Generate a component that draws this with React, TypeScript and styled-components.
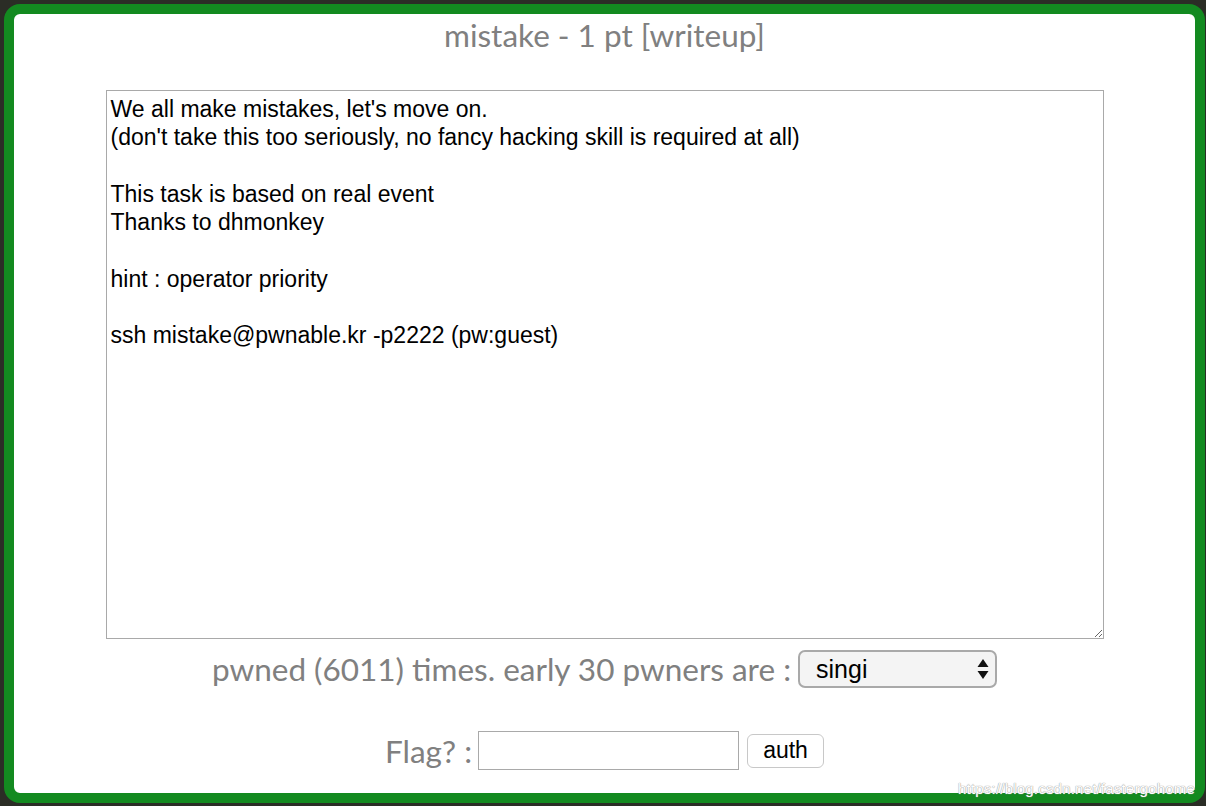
import React from "react";
import styled, { createGlobalStyle } from "styled-components";

const Global = createGlobalStyle`
  html, body { margin: 0; padding: 0; }
  body {
    width: 1206px;
    height: 806px;
    overflow: hidden;
    background: #2b2d26;
    font-family: "Liberation Sans", Arial, sans-serif;
  }
`;

const Page = styled.div`
  width: 1206px;
  height: 806px;
  padding: 4px 1px 3px 4px;
  box-sizing: border-box;
  position: relative;
`;

const Card = styled.div`
  box-sizing: border-box;
  height: 100%;
  background: #fff;
  border: 10px solid #138a20;
  border-radius: 16px;
  display: flex;
  flex-direction: column;
  align-items: center;
`;

const Title = styled.h1`
  margin: 2px 0 0;
  font-family: Lato, sans-serif;
  font-weight: 400;
  font-size: 31.5px;
  line-height: 38px;
  color: #808080;
`;

const Description = styled.textarea`
  box-sizing: border-box;
  margin-top: 36px;
  width: 998px;
  height: 549px;
  border: 1px solid #a9a9a9;
  padding: 4px 4px 2px;
  font-family: "Liberation Sans", Arial, sans-serif;
  font-size: 23px;
  line-height: 28.3px;
  color: #000;
  background: #fff;
  resize: both;
  outline: none;
`;

const Row = styled.div<{ $mt: number; $gap: number }>`
  display: flex;
  align-items: center;
  margin-top: ${(p) => p.$mt}px;
  gap: ${(p) => p.$gap}px;
`;

const Label = styled.span`
  font-family: Lato, sans-serif;
  font-size: 31.5px;
  line-height: 36px;
  color: #808080;
`;

const SelectBox = styled.div`
  box-sizing: border-box;
  width: 199px;
  height: 38px;
  border: 2px solid #a9a9a9;
  border-radius: 7px;
  background: #f4f4f4;
  display: flex;
  align-items: center;
  justify-content: space-between;
  padding: 0 6px 0 16px;
  font-family: "Liberation Sans", Arial, sans-serif;
  font-size: 25px;
  color: #000;
`;

const Arrows = styled.svg`
  width: 12px;
  height: 22px;
`;

const FlagInput = styled.input`
  box-sizing: border-box;
  width: 261px;
  height: 39px;
  border: 1px solid #a9a9a9;
  padding: 2px 6px;
  font-size: 22px;
  outline: none;
`;

const AuthButton = styled.button`
  box-sizing: border-box;
  width: 77px;
  height: 34px;
  margin-left: 2px;
  border: 1px solid #c8c8c8;
  border-radius: 6px;
  background: #fff;
  font-family: "Liberation Sans", Arial, sans-serif;
  font-size: 23px;
  color: #000;
  padding: 0;
`;

const Watermark = styled.div`
  position: absolute;
  right: 11px;
  bottom: 9px;
  font-family: "Liberation Sans", Arial, sans-serif;
  font-size: 15px;
  color: #fff;
  letter-spacing: 0.2px;
  text-shadow: 0 0 1px #9a9a9a, 0 0 1px #9a9a9a;
`;

const text = `We all make mistakes, let's move on.
(don't take this too seriously, no fancy hacking skill is required at all)

This task is based on real event
Thanks to dhmonkey

hint : operator priority

ssh mistake@pwnable.kr -p2222 (pw:guest)`;

export default function App() {
  return (
    <>
      <Global />
      <Page>
        <Card>
          <Title>mistake - 1 pt [writeup]</Title>
          <Description defaultValue={text} spellCheck={false} />
          <Row $mt={11} $gap={7}>
            <Label>pwned (6011) times. early 30 pwners are :</Label>
            <SelectBox>
              <span>singi</span>
              <Arrows viewBox="0 0 12 22">
                <path d="M6 1 L11.5 9 L0.5 9 Z" fill="#111" />
                <path d="M6 21 L11.5 13 L0.5 13 Z" fill="#111" />
              </Arrows>
            </SelectBox>
          </Row>
          <Row $mt={43} $gap={6}>
            <Label>Flag? :</Label>
            <FlagInput />
            <AuthButton>auth</AuthButton>
          </Row>
        </Card>
        <Watermark>https://blog.csdn.net/fastergohome</Watermark>
      </Page>
    </>
  );
}
